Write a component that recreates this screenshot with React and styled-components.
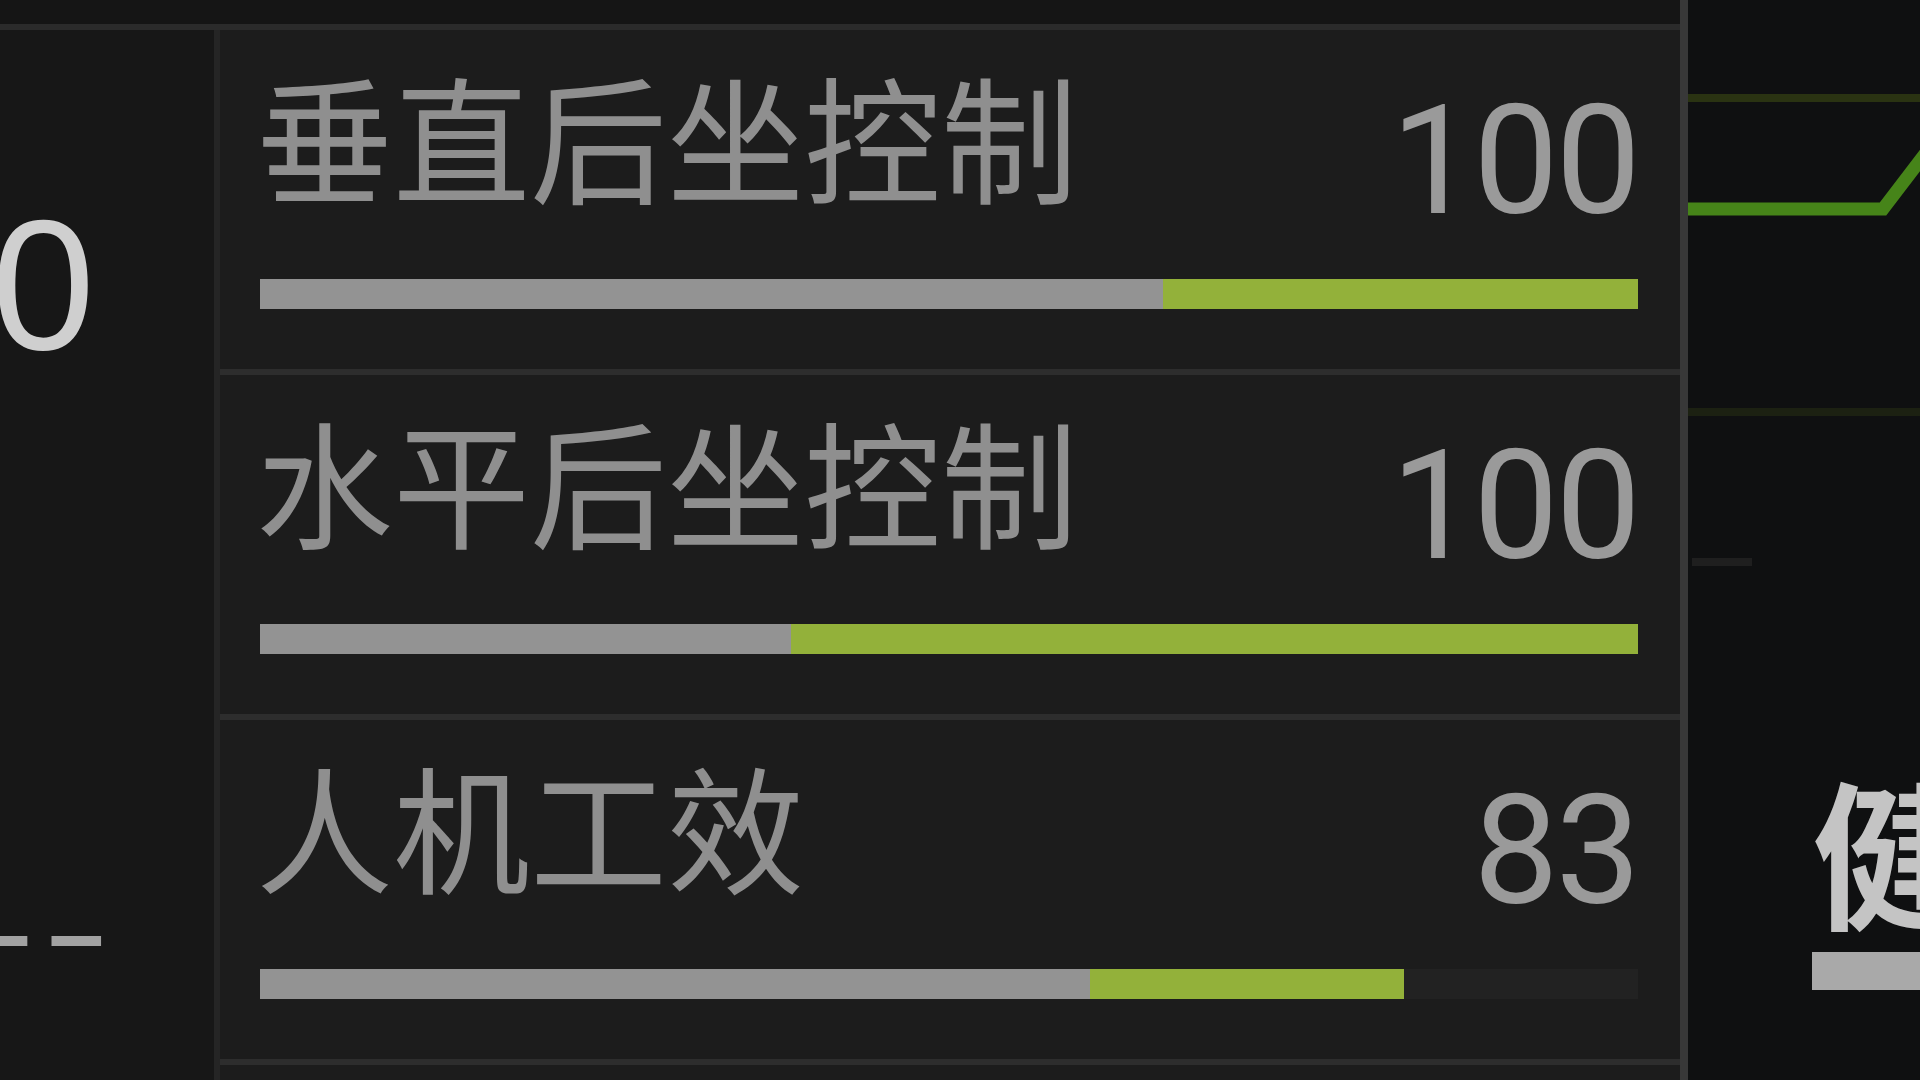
import React from 'react'
import styled, { createGlobalStyle } from 'styled-components'

const GlobalStyle = createGlobalStyle`
  html, body {
    margin: 0;
    padding: 0;
    background: #161616;
    overflow: hidden;
  }
  * { box-sizing: border-box; }
`

const stats = [
  { label: '垂直后坐控制', value: 100, base: 65.5 },
  { label: '水平后坐控制', value: 100, base: 38.5 },
  { label: '人机工效', value: 83, base: 60.2 },
]

const Page = styled.div`
  display: flex;
  width: 1920px;
  height: 1080px;
  overflow: hidden;
  background: #161616;
  font-family: "Noto Sans CJK SC", "Noto Sans", sans-serif;
`

const Main = styled.div`
  width: 1680px;
  flex: none;
  display: flex;
  flex-direction: column;
`

const TopStrip = styled.div`
  height: 24px;
  flex: none;
  background: #151515;
`

const Content = styled.div`
  flex: 1;
  display: flex;
  border-top: 6px solid #2b2b2b;
  min-height: 0;
`

const LeftPane = styled.div`
  width: 214px;
  flex: none;
  background: #171717;
  display: flex;
  flex-direction: column;
  overflow: hidden;
`

const BigValue = styled.div`
  width: 95px;
  display: flex;
  justify-content: flex-end;
  margin-top: 162px;
  font-family: "Liberation Sans", Arial, sans-serif;
  font-size: 186px;
  line-height: 1;
  color: #cfcfcf;
  white-space: nowrap;
`

const Dashes = styled.div`
  width: 122px;
  display: flex;
  justify-content: flex-end;
  margin-top: 505px;
  font-family: "Liberation Sans", Arial, sans-serif;
  font-size: 100px;
  font-weight: 700;
  line-height: 1;
  color: #a2a2a2;
  letter-spacing: 18px;
  white-space: nowrap;
`

const StatList = styled.div`
  flex: 1;
  display: flex;
  flex-direction: column;
  border-left: 6px solid #252525;
  background: #1c1c1c;
`

const StatRow = styled.div`
  height: 345px;
  flex: none;
  display: flex;
  flex-direction: column;
  padding: 0 42px 60px 36px;
  border-bottom: 6px solid #2d2d2d;
`

const StatHead = styled.div`
  flex: 1;
  display: flex;
  align-items: center;
  justify-content: space-between;
  padding-bottom: 40px;
`

const StatLabel = styled.span`
  font-family: "Noto Sans CJK SC", sans-serif;
  font-size: 137px;
  font-weight: 400;
  line-height: 1;
  color: #8f8f8f;
`

const StatValue = styled.span`
  font-family: Roboto, "Liberation Sans", sans-serif;
  font-size: 152px;
  font-weight: 400;
  line-height: 1;
  color: #9a9a9a;
  letter-spacing: -3px;
  margin-top: 52px;
`

const Track = styled.div`
  height: 30px;
  flex: none;
  display: flex;
  margin-left: 4px;
  background: #222222;
`

const Segment = styled.div`
  height: 100%;
  flex: none;
  background: ${p => (p.$green ? '#93b13a' : '#939393')};
`

const RightPane = styled.div`
  flex: 1;
  position: relative;
  background: #0f1011;
  border-left: 8px solid #383838;
  overflow: hidden;
`

const Chart = styled.svg`
  position: absolute;
  left: 0;
  top: 0;
`

const SideStat = styled.div`
  position: absolute;
  left: 124px;
  top: 768px;
  display: flex;
  flex-direction: column;
  gap: 24px;
`

const SideLabel = styled.span`
  font-family: "Noto Sans CJK SC", sans-serif;
  font-size: 160px;
  font-weight: 700;
  line-height: 1;
  color: #c4c4c4;
  white-space: nowrap;
`

const SideBar = styled.div`
  width: 200px;
  height: 38px;
  background: #a9a9a9;
`

function Stat({ label, value, base }) {
  return (
    <StatRow>
      <StatHead>
        <StatLabel>{label}</StatLabel>
        <StatValue>{value}</StatValue>
      </StatHead>
      <Track>
        <Segment style={{ width: `${base}%` }} />
        <Segment $green style={{ width: `${value - base}%` }} />
      </Track>
    </StatRow>
  )
}

export default function App() {
  return (
    <>
      <GlobalStyle />
      <Page>
        <Main>
          <TopStrip />
          <Content>
            <LeftPane>
              <BigValue>100</BigValue>
              <Dashes>––</Dashes>
            </LeftPane>
            <StatList>
              {stats.map(s => (
                <Stat key={s.label} {...s} />
              ))}
            </StatList>
          </Content>
        </Main>
        <RightPane>
          <Chart width="232" height="1080" viewBox="0 0 232 1080">
            <line x1="0" y1="98" x2="232" y2="98" stroke="#2a3312" strokeWidth="8" />
            <polyline points="0,209 195,209 240,150" fill="none" stroke="#468419" strokeWidth="13" />
            <line x1="0" y1="412" x2="232" y2="412" stroke="#1c2112" strokeWidth="8" />
            <line x1="4" y1="562" x2="64" y2="562" stroke="#1f1f1f" strokeWidth="8" />
          </Chart>
          <SideStat>
            <SideLabel>健康</SideLabel>
            <SideBar />
          </SideStat>
        </RightPane>
      </Page>
    </>
  )
}
